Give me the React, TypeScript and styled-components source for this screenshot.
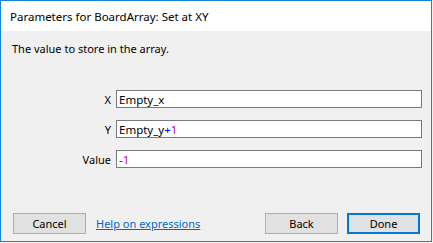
import React from "react";
import styled, { createGlobalStyle } from "styled-components";

const Global = createGlobalStyle`
  html, body { margin: 0; padding: 0; background: #f0f0f0; }
  body { font-family: "Noto Sans", "Open Sans", sans-serif; font-size: 11px; }
`;

const Frame = styled.div`
  width: 432px;
  height: 242px;
  box-sizing: border-box;
  border: 1px solid #1883d7;
  background: #f0f0f0;
  display: flex;
  flex-direction: column;
`;

const TitleBar = styled.div`
  height: 30px;
  background: #ffffff;
  display: flex;
  align-items: center;
  padding-left: 9px;
  font-size: 11.5px;
  color: #000;
`;

const Body = styled.div`
  flex: 1;
  display: flex;
  flex-direction: column;
  padding: 10px 9px 7px 11px;
`;

const Description = styled.div`
  color: #000;
  line-height: 16px;
`;

const Form = styled.div`
  margin-top: 33px;
  display: grid;
  grid-template-columns: 99px 1fr;
  column-gap: 5px;
  row-gap: 12px;
  align-items: center;
`;

const Label = styled.div`
  text-align: right;
  color: #000;
`;

const Field = styled.div`
  height: 18px;
  box-sizing: border-box;
  border: 1px solid #7a7a7a;
  background: #fff;
  display: flex;
  align-items: center;
  padding-left: 2px;
  font-size: 11.5px;
  color: #000;
  white-space: pre;
`;

const Tok = styled.span<{ $kind: "op" | "num" }>`
  color: ${(p) => (p.$kind === "op" ? "#0000ff" : "#c000c0")};
`;

const Footer = styled.div`
  margin-top: auto;
  display: flex;
  align-items: center;
  padding-left: 1px;
  padding-right: 2px;
`;

const Button = styled.button<{ $primary?: boolean }>`
  width: 73px;
  height: 21px;
  box-sizing: border-box;
  background: #e1e1e1;
  border: ${(p) => (p.$primary ? "2px solid #0078d7" : "1px solid #adadad")};
  font-family: inherit;
  font-size: 11px;
  color: #000;
  padding: 0;
  margin: 0;
`;

const Link = styled.a`
  margin-left: 10px;
  color: #0066cc;
  text-decoration: underline;
`;

const Spacer = styled.div`
  flex: 1;
`;

const Gap = styled.div`
  width: 9px;
`;

export default function App() {
  return (
    <>
      <Global />
      <Frame>
        <TitleBar>Parameters for BoardArray: Set at XY</TitleBar>
        <Body>
          <Description>The value to store in the array.</Description>
          <Form>
            <Label>X</Label>
            <Field>Empty_x</Field>
            <Label>Y</Label>
            <Field>
              Empty_y<Tok $kind="op">+</Tok>
              <Tok $kind="num">1</Tok>
            </Field>
            <Label>Value</Label>
            <Field>
              <Tok $kind="op">-</Tok>
              <Tok $kind="num">1</Tok>
            </Field>
          </Form>
          <Footer>
            <Button>Cancel</Button>
            <Link>Help on expressions</Link>
            <Spacer />
            <Button>Back</Button>
            <Gap />
            <Button $primary>Done</Button>
          </Footer>
        </Body>
      </Frame>
    </>
  );
}
